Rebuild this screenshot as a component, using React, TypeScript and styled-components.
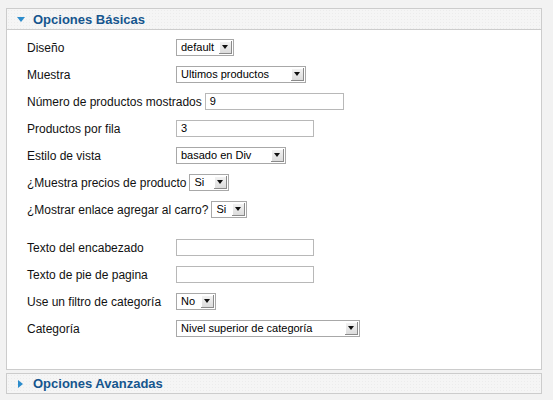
import styled, { createGlobalStyle } from 'styled-components';

const GlobalStyle = createGlobalStyle`
    html, body {
        margin: 0;
        padding: 0;
        background: #f2f2f2;
    }
    body {
        font-family: "Liberation Sans", Arial, sans-serif;
    }
`;

const Page = styled.div`
    padding: 8px 11px 0 6px;
    display: flex;
    flex-direction: column;
    gap: 3px;
`;

const Pane = styled.div`
    border: 1px solid #cccccc;
    background: #ffffff;
`;

const PaneTitle = styled.div<{ open: boolean }>`
    height: ${(props) => (props.open ? '20px' : '19px')};
    display: flex;
    align-items: center;
    gap: ${(props) => (props.open ? '8px' : '10px')};
    padding-left: 10px;
    background-color: #f5f5f5;
    background-image: radial-gradient(#ececec 0.6px, transparent 0.7px);
    background-size: 3px 3px;
    border-bottom: ${(props) => (props.open ? '1px solid #cccccc' : 'none')};
    color: #16568e;
    font-size: 13px;
    font-weight: bold;
`;

const Arrow = styled.span<{ open: boolean }>`
    width: 0;
    height: 0;
    ${(props) =>
        props.open
            ? `
        margin-top: 1px;
        border-left: 4px solid transparent;
        border-right: 4px solid transparent;
        border-top: 5px solid #2c8ccc;
    `
            : `
        margin-left: 1px;
        border-top: 4px solid transparent;
        border-bottom: 4px solid transparent;
        border-left: 5px solid #2c8ccc;
    `}
`;

const PaneBody = styled.div`
    padding: 9px 0 32px 20px;
    display: flex;
    flex-direction: column;
    gap: 10px;
`;

const Row = styled.div`
    height: 17px;
    display: flex;
    align-items: center;
    gap: 3px;
`;

const Spacer = styled.div`
    height: 1px;
`;

const Label = styled.span`
    min-width: 146px;
    font-size: 12px;
    color: #111111;
    white-space: nowrap;
`;

const TextBox = styled.div<{ width: number }>`
    box-sizing: border-box;
    width: ${(props) => props.width}px;
    height: 17px;
    border: 1px solid #b8b8b8;
    background: #ffffff;
    padding-left: 4px;
    font-size: 11px;
    line-height: 15px;
    color: #000000;
`;

const SelectBox = styled.div<{ width: number }>`
    box-sizing: border-box;
    width: ${(props) => props.width}px;
    height: 17px;
    display: flex;
    align-items: stretch;
    border: 1px solid #a8a8a8;
    background: #ffffff;
    font-size: 11px;
    color: #000000;
`;

const SelectText = styled.span`
    flex: 1;
    padding-left: 4px;
    line-height: 15px;
    white-space: nowrap;
    overflow: hidden;
`;

const SelectButton = styled.span`
    width: 12px;
    margin: 1px 1px 1px 0;
    display: flex;
    align-items: center;
    justify-content: center;
    background: linear-gradient(#f4f4f4, #dcdcdc);
    border-right: 1px solid #8a8a8a;
    border-bottom: 1px solid #8a8a8a;
    box-shadow: inset 1px 1px 0 #ffffff;

    &::after {
        content: '';
        width: 0;
        height: 0;
        border-left: 3px solid transparent;
        border-right: 3px solid transparent;
        border-top: 4px solid #111111;
    }
`;

function Select({ value, width }: { value: string; width: number }) {
    return (
        <SelectBox width={width}>
            <SelectText>{value}</SelectText>
            <SelectButton />
        </SelectBox>
    );
}

interface IField {
    label: string;
    kind: 'select' | 'text' | 'spacer';
    value?: string;
    width?: number;
}

const fields: IField[] = [
    { label: 'Diseño', kind: 'select', value: 'default', width: 58 },
    { label: 'Muestra', kind: 'select', value: 'Ultimos productos', width: 130 },
    { label: 'Número de productos mostrados', kind: 'text', value: '9', width: 139 },
    { label: 'Productos por fila', kind: 'text', value: '3', width: 138 },
    { label: 'Estilo de vista', kind: 'select', value: 'basado en Div', width: 110 },
    { label: '¿Muestra precios de producto', kind: 'select', value: 'Si', width: 40 },
    { label: '¿Mostrar enlace agregar al carro?', kind: 'select', value: 'Si', width: 36 },
    { label: '', kind: 'spacer' },
    { label: 'Texto del encabezado', kind: 'text', value: '', width: 138 },
    { label: 'Texto de pie de pagina', kind: 'text', value: '', width: 138 },
    { label: 'Use un filtro de categoría', kind: 'select', value: 'No', width: 40 },
    { label: 'Categoría', kind: 'select', value: 'Nivel superior de categoría', width: 184 },
];

function App() {
    return (
        <>
            <GlobalStyle />
            <Page>
                <Pane>
                    <PaneTitle open={true}>
                        <Arrow open={true} />
                        Opciones Básicas
                    </PaneTitle>
                    <PaneBody>
                        {fields.map((f, i) =>
                            f.kind === 'spacer' ? (
                                <Spacer key={i} />
                            ) : (
                                <Row key={i}>
                                    <Label>{f.label}</Label>
                                    {f.kind === 'select' ? (
                                        <Select value={f.value ?? ''} width={f.width ?? 60} />
                                    ) : (
                                        <TextBox width={f.width ?? 138}>{f.value}</TextBox>
                                    )}
                                </Row>
                            )
                        )}
                    </PaneBody>
                </Pane>
                <Pane>
                    <PaneTitle open={false}>
                        <Arrow open={false} />
                        Opciones Avanzadas
                    </PaneTitle>
                </Pane>
            </Page>
        </>
    );
}

export default App;
